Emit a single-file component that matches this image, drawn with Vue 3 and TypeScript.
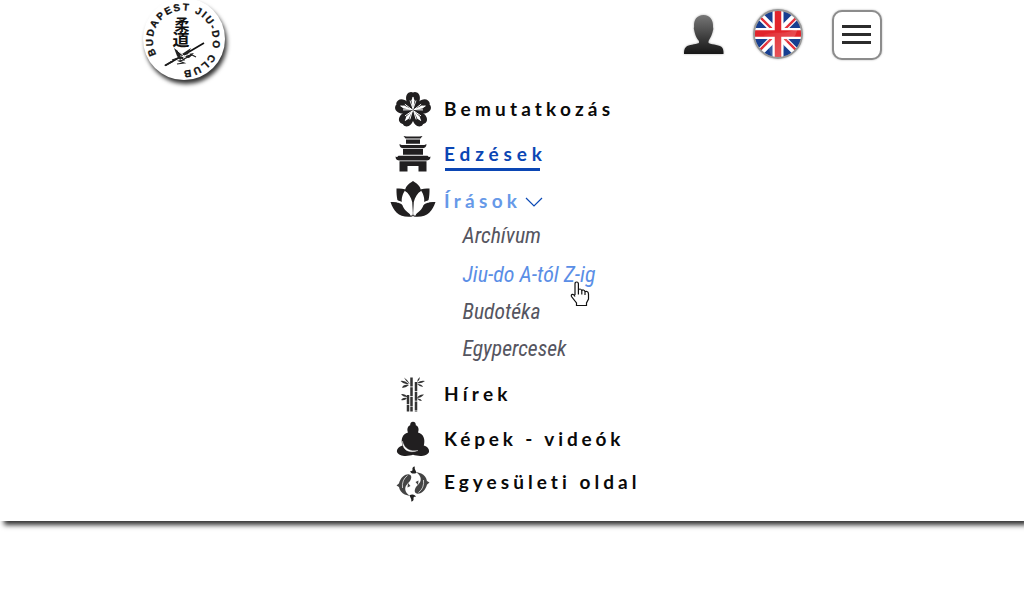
<script setup lang="ts">
interface MenuItem {
  icon: 'flower' | 'pagoda' | 'lotus' | 'bamboo' | 'buddha' | 'koi'
  label: string
  width: number
  baseline: number
  state?: 'active' | 'open'
  children?: { label: string; width: number; baseline: number; hover?: boolean }[]
}

const items: MenuItem[] = [
  { icon: 'flower', label: 'Bemutatkozás', width: 166, baseline: 29.5 },
  { icon: 'pagoda', label: 'Edzések', width: 98, baseline: 30, state: 'active' },
  {
    icon: 'lotus', label: 'Írások', width: 73, baseline: 31.5, state: 'open',
    children: [
      { label: 'Archívum', width: 78.5, baseline: 26 },
      { label: 'Jiu-do A-tól Z-ig', width: 133, baseline: 27, hover: true },
      { label: 'Budotéka', width: 78, baseline: 26.5 },
      { label: 'Egypercesek', width: 104, baseline: 26 },
    ],
  },
  { icon: 'bamboo', label: 'Hírek', width: 63.5, baseline: 30 },
  { icon: 'buddha', label: 'Képek - videók', width: 176.5, baseline: 30 },
  { icon: 'koi', label: 'Egyesületi oldal', width: 192.5, baseline: 28 },
]
const petals = [0, 72, 144, 216, 288]
</script>

<template>
  <div class="panel">
    <header class="header">
      <svg class="logo" width="100" height="92" viewBox="134 0 100 92">
        <defs>
          <path id="ring" d="M156.500 54.500 A30 30 0 1 1 184 70.500" />
        </defs>
        <circle class="disc" cx="184" cy="39" r="41" />
        <text class="ring-text" textLength="155"><textPath href="#ring" textLength="155">BUDAPEST JIU-DO CLUB</textPath></text>
        <text class="kanji"><tspan x="174.500" y="29.500" font-size="15">柔</tspan><tspan x="172.500" y="46" font-size="17">道</tspan></text>
        <path d="M165 65.500L182 56L204 43" fill="none" stroke="#111" stroke-width="1.700" />
        <path d="M164 66l7-5 2 1-7 4zM174 48l8 6 9-6-3 6 6-1-5 5-5-1-4 3-3-4z" fill="#222" />
        <path d="M178 51l6 5 6-2M180 56l6 1" stroke="#fff" fill="none" />
        <path d="M172 60l9-3 3 3-5 1 5 2-7 1M184 59l8-4 4 2" stroke="#222" stroke-width="1.200" fill="none" />
      </svg>
      <nav class="tools">
        <svg class="user" width="44" height="44" viewBox="0 0 44 44">
          <defs>
            <linearGradient id="ug" x1="0" y1="0" x2="0" y2="1">
              <stop offset="0" stop-color="#777" /><stop offset=".65" stop-color="#363636" /><stop offset="1" stop-color="#171717" />
            </linearGradient>
          </defs>
          <path fill="url(#ug)" d="M21.500 2C28 2 31.500 7 31 14l.3 2-1 4C29 24 27.500 26 26.500 28V30C31 32 38 31.500 40.500 35c1 2 1 4 1 6H2c0-3 0-5 2-7 3-3 9-2 13-4v-2c-2-2-3.500-5-4.300-8.500l-.9-4 .3-2C11.500 7 15 2 21.500 2Z" />
        </svg>
        <svg class="flag" width="52" height="52" viewBox="0 0 52 52">
          <defs>
            <clipPath id="fc"><circle cx="26" cy="26" r="23.500" /></clipPath>
            <linearGradient id="fg" x1="0" y1="0" x2="1" y2="1">
              <stop offset="0" stop-color="#fff" stop-opacity=".02" /><stop offset="1" stop-color="#fff" stop-opacity=".3" />
            </linearGradient>
          </defs>
          <g clip-path="url(#fc)">
            <path fill="#173f91" d="M0 0h52v52H0z" />
            <path stroke="#fff" stroke-width="7.500" d="M0 0l52 52M52 0L0 52" />
            <path stroke="#e3303a" stroke-width="2.400" d="M0 1l23 23M53 1L30 24M-1 51l23-23M29 27l23 23" />
            <path stroke="#fff" stroke-width="11" d="M26 0v52M0 25.500h52" />
            <path stroke="#e2242b" stroke-width="6.500" d="M26 0v52M0 25.500h52" />
            <path fill="url(#fg)" d="M12 27C24 22 32 28 46 20L43 28C38 32 36 30 32 40L28 50H20Z" />
          </g>
          <circle cx="26" cy="26" r="24" fill="none" stroke="#999" stroke-width="1.800" />
        </svg>
        <button class="burger" aria-label="Menu"><i /><i /><i /></button>
      </nav>
    </header>

    <ul class="menu">
      <li v-for="item in items" :key="item.label">
        <a class="row" :class="item.state">
          <span class="icon">
            <svg v-if="item.icon === 'flower'" width="36" height="36" viewBox="0 0 36 36">
              <g v-for="a in petals" :key="a" :transform="`rotate(${a} 18 19)`">
                <path d="M18 19.500L12 11.500C10.300 7.500 11 3.500 13.500 1.800Q16.200.2 18 1.600Q19.800.2 22.500 1.800C25 3.500 25.700 7.500 24 11.500Z" fill="#211f20" />
                <path d="M18 19V6M18 18l-3-8.500M18 18l3-8.500" stroke="#fff" stroke-width=".9" />
                <path d="M16.400 9.500L18 5.500l1.600 4L18 18Z" fill="#fff" />
              </g>
            </svg>
            <svg v-else-if="item.icon === 'pagoda'" width="36" height="36" viewBox="0 0 36 36">
              <g fill="#211f20">
                <path d="M8.500 0l3 .6h13l3-.6-2 2.600h-15zM11 3.600h14v4.200H11z" />
                <path d="M4.500 8l2 1h23l2-1c0 3-2 4-4 4.200h-19C6 12 4.500 11 4.500 8ZM8 13h20v5.800H8z" />
                <path d="M.5 20.500c1 .8 2 .5 3-.8h29c1 1.300 2 1.600 3 .8 0 3-2 4-4 4h-27c-2 0-4-1-4-4ZM4.500 25.300h27V35.500h-8V30h-11v5.500h-8z" />
              </g>
            </svg>
            <svg v-else-if="item.icon === 'lotus'" width="46" height="36" viewBox="0 0 46 36">
              <g fill="#211f20">
                <path d="M6.500 7.500C12 7 16 8 19 11L23 35C13 34 6 25 6.500 7.500ZM39.500 7.500C34 7 30 8 27 11L23 35C33 34 40 25 39.500 7.500Z" />
                <path d="M.5 21C12 20 20 26 22.500 35.500 9 37 4 31 .5 21ZM45.500 21C34 20 26 26 23.500 35.500 37 37 42 31 45.500 21Z" />
              </g>
              <path d="M15 9.500C22 13 25 22 22.600 34 12 30 8.500 19 15 9.500ZM31 9.500C24 13 21 22 23.400 34 34 30 37.500 19 31 9.500Z" fill="#fff" />
              <path d="M23 0C28 3 31 6.500 31 10C27.500 12 25 16 23.800 21L23 34.500 22.200 21C21 16 18.500 12 15 10C15 6.500 18 3 23 0Z" fill="#211f20" />
              <path d="M6.500 20C13 21.500 18.500 27 21.500 34.500M39.500 20C33 21.500 27.500 27 24.500 34.500" fill="none" stroke="#fff" stroke-width="1.800" />
            </svg>
            <svg v-else-if="item.icon === 'bamboo'" width="36" height="36" viewBox="0 0 36 36">
              <path d="M16.500 1.500v34M21 6v29.500M13 19v16.500" stroke="#333" stroke-width="2.500" stroke-dasharray="9 .7" />
              <path d="M15 8Q13 4 9 1.500Q11 6 15 8ZM14 8Q9 4 5.500 5Q9 9 14 8ZM14 9Q8 8 7 12Q11 12 14 9ZM22 6Q22 3 25 1Q25 4 22 6ZM22 7Q26 4 30 5Q26 8 22 7ZM22 8Q27 8 28 11Q25 11 22 8ZM13 21Q9 17 6 18.500Q9 21.500 13 21ZM12 22Q8 21 6 24Q10 25 12 22ZM22 22Q24 18 29 18.500Q26 22 22 22ZM22 22.500Q26 22 27 25Q24 25 22 22.500Z" fill="#333" />
            </svg>
            <svg v-else-if="item.icon === 'buddha'" width="36" height="36" viewBox="0 0 36 36">
              <path d="M18 .8C20 .8 21 2.500 20.800 4.200 24 5.500 24 9 23 11.500 28.500 13 30.500 18 28.800 24.500 32.500 25.500 34.500 28 34 31 32 36 23 35.500 18 33.800 13 35.500 4 36 2 31 1.500 28 4 25.500 7.500 24.500 5.500 18 7.500 13 13 11.500 12 9 12 5.500 15.200 4.200 15 2.500 16 .8 18 .8Z" fill="#211f20" />
              <path d="M7.500 20C7 29 14 33 23 29.500 15 31 9 27.500 7.500 20Z" fill="#fff" stroke="#fff" stroke-width=".3" />
            </svg>
            <svg v-else width="36" height="36" viewBox="0 0 36 36">
              <g v-for="a in [0, 180]" :key="a" :transform="`rotate(${a} 18 18)`">
                <path d="M16.300 11C16 7.500 11.500 7.500 8 10.500 3.500 14.500 2.500 21 6 25.500 8 28 11 29.300 15 30 11.500 27.500 9.500 24.500 10.500 21 11.500 17.500 16 16 16.300 11Z" fill="#444" />
                <path d="M12.500 9.500Q6.500 14 7.500 22" stroke="#fff" stroke-width=".7" fill="none" />
                <path d="M5 16.500L1.500 19.500 4 21ZM13 17l2.500 3-3 1.500z" fill="#444" />
                <path d="M14.500 29.300C17 27.500 20.500 28.500 21 31 20 30.500 18.500 31 18.500 32 19 34 18 35.500 16.200 35.500 17 33 15 31.500 14.500 29.300Z" fill="#222" />
              </g>
            </svg>
          </span>
          <svg class="label" :width="item.width + 4" height="45">
            <text x="0" :y="item.baseline" :textLength="item.width">{{ item.label }}</text>
            <rect v-if="item.state === 'active'" x="1" y="37" width="95" height="3" />
          </svg>
          <svg v-if="item.children" class="chevron" width="18" height="11" viewBox="0 0 18 11">
            <path d="M1 1l8 8 8-8" fill="none" stroke="#0b49b5" stroke-width="1.200" />
          </svg>
        </a>
        <ul v-if="item.children" class="submenu">
          <li v-for="c in item.children" :key="c.label" :class="{ hover: c.hover }">
            <svg :width="c.width + 6" height="37"><text x=".5" :y="c.baseline" :textLength="c.width" lengthAdjust="spacingAndGlyphs">{{ c.label }}</text></svg>
            <svg v-if="c.hover" class="cursor" width="20" height="26" viewBox="0 0 20 26">
              <path d="M5 14V3Q5 1 6.700 1T8.400 3V9.500Q8.500 8 10 8T11.800 10Q12 8.800 13.400 9T15 11Q15.500 10 17 10.500T18.500 13V18L16.500 22V24.500H6.500V22L1.500 15.500Q.8 13.500 2.500 13.300T5 15.500M8.400 9v4.500M11.800 10v3.500M15 11v3" fill="#fff" stroke="#111" stroke-width="1.200" />
            </svg>
          </li>
        </ul>
      </li>
    </ul>
  </div>
</template>

<style>
html, body { min-height: 608px; background: #fff; }
</style>

<style scoped>
.panel {
  height: 521px;
  background: #fff;
  box-shadow: 4px 4px 5px #333;
}
.header {
  display: flex;
  height: 86px;
  padding: 0 142px 0 134px;
  justify-content: space-between;
}
.logo { overflow: visible; }
.disc { fill: #fff; filter: drop-shadow(2px 4px 2px rgba(0, 0, 0, .8)); }
.ring-text { font: bold 10px "Liberation Sans", sans-serif; fill: #111; stroke: #111; stroke-width: .3px; }
.kanji { font-family: "Noto Sans CJK JP", sans-serif; font-weight: 700; fill: #111; }
.tools { display: flex; padding-top: 8px; }
.user { margin: 5px 26px 0 0; filter: drop-shadow(0 0 1px #aaa); }
.flag { margin-right: 28px; filter: drop-shadow(0 0 1px #aaa); }
.burger {
  display: flex;
  flex-direction: column;
  justify-content: center;
  align-items: center;
  gap: 5px;
  width: 50px;
  height: 50px;
  margin-top: 2px;
  padding: 0 1px 1px 0;
  box-sizing: border-box;
  background: #fff;
  border: 2px solid #8c8c8c;
  border-radius: 10px;
  box-shadow: 0 0 2px #aaa;
}
.burger i { width: 29px; height: 3px; background: #2b2b2b; }
.menu, .submenu { list-style: none; margin: 0; padding: 0; }
.menu { padding-left: 388px; }
.row { display: flex; height: 45px; align-items: center; color: #0a0a0a; }
.icon { display: flex; justify-content: center; align-items: flex-end; width: 50px; height: 37px; margin-right: 6px; }
.label { fill: currentColor; font: bold 19px Lato, sans-serif; font-variant-ligatures: none; overflow: visible; }
.active { color: #0b46b4; }
.open { color: #6699e8; }
.chevron { margin: 8px 0 0 4px; }
.submenu { margin: -4px 0 4px; padding-left: 74px; height: 150px; }
.submenu li { position: relative; height: 37.5px; color: #555560; }
.submenu svg { display: block; overflow: visible; fill: currentColor; }
.submenu text { font: italic 22px "Roboto Condensed", Roboto, sans-serif; }
.submenu .hover { color: #5a8ee6; }
.submenu .cursor { position: absolute; left: 108px; top: 26px; z-index: 1; }
</style>
